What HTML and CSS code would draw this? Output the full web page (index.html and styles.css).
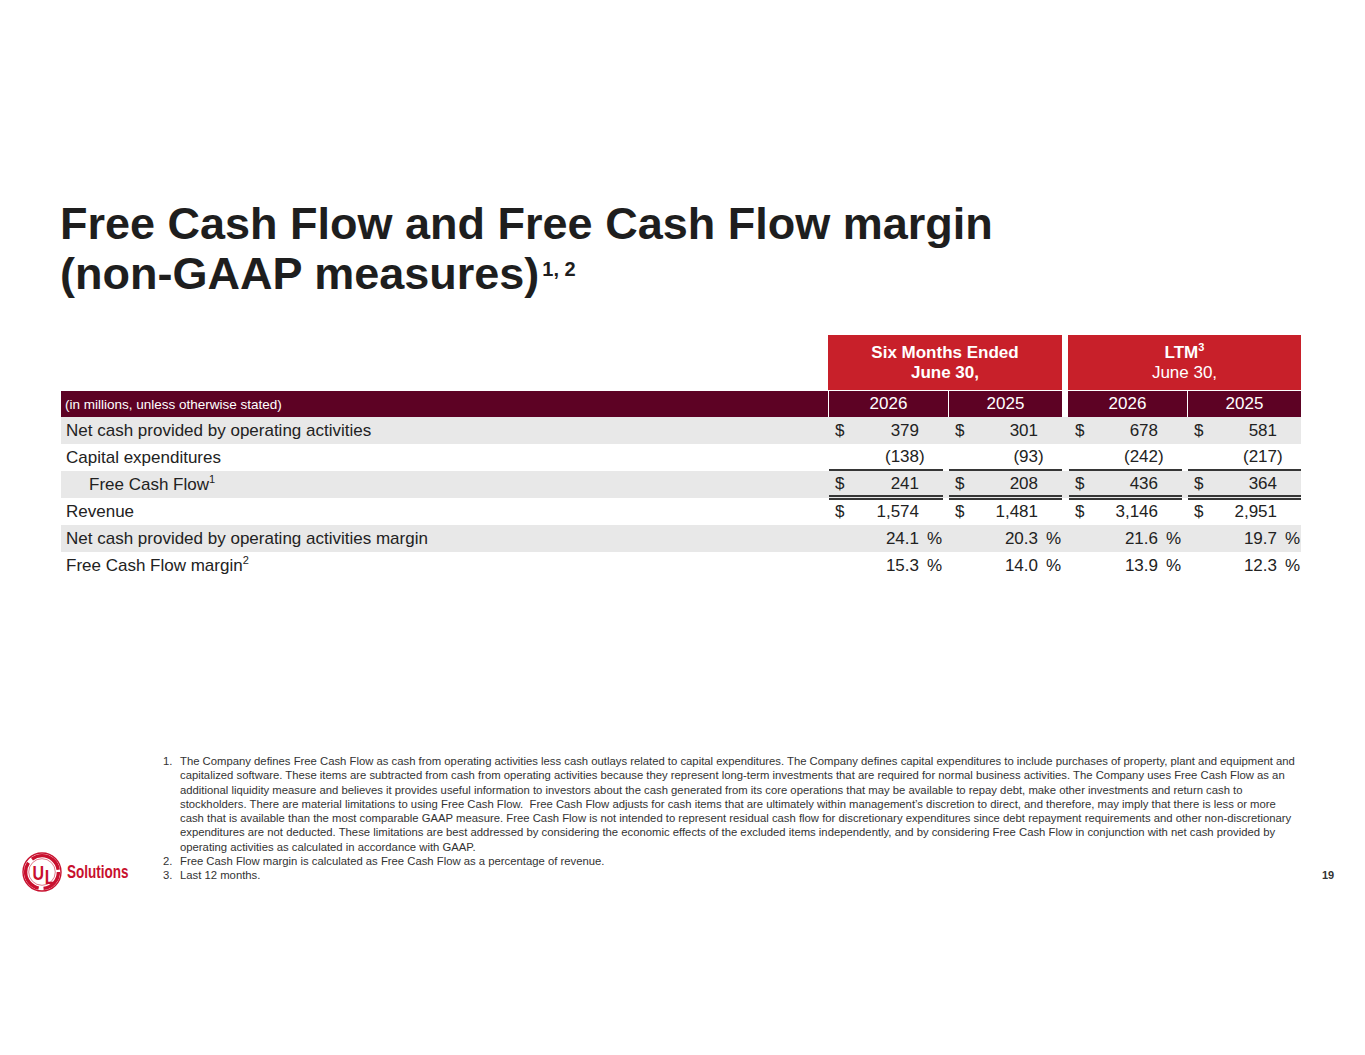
FILE: index.html
```html
<!DOCTYPE html>
<html lang="en">
<head>
<meta charset="utf-8">
<title>Free Cash Flow</title>
<link rel="stylesheet" href="styles.css">
</head>
<body>
<div class="slide">
  <h1 class="title">Free Cash Flow and Free Cash Flow margin<br>(non-GAAP measures)<span class="tsup">1, 2</span></h1>

  <div class="table">
    <div class="grid hdr-top">
      <div></div>
      <div class="redbox g1"><b>Six Months Ended</b><b>June 30,</b></div>
      <div class="redbox g2"><b>LTM<sup class="sm">3</sup></b><span>June 30,</span></div>
    </div>
    <div class="grid hdr-bot">
      <div class="dk lbl-h">(in millions, unless otherwise stated)</div>
      <div class="dk yr sep">2026</div>
      <div class="dk yr sep">2025</div>
      <div class="gap"></div>
      <div class="dk yr">2026</div>
      <div class="dk yr sep">2025</div>
    </div>

    <div class="grid row gray">
      <div class="lbl">Net cash provided by operating activities</div>
      <div class="c c-a"><div class="in"><span>$</span><span class="num">379</span><span class="sfx"></span></div></div>
      <div class="c c-b"><div class="in"><span>$</span><span class="num">301</span><span class="sfx"></span></div></div>
      <div class="gap"></div>
      <div class="c c-a"><div class="in"><span>$</span><span class="num">678</span><span class="sfx"></span></div></div>
      <div class="c c-b"><div class="in"><span>$</span><span class="num">581</span><span class="sfx"></span></div></div>
    </div>

    <div class="grid row single">
      <div class="lbl">Capital expenditures</div>
      <div class="c c-a"><div class="in"><span class="num">(138</span><span class="sfx">)</span></div></div>
      <div class="c c-b"><div class="in"><span class="num">(93</span><span class="sfx">)</span></div></div>
      <div class="gap"></div>
      <div class="c c-a"><div class="in"><span class="num">(242</span><span class="sfx">)</span></div></div>
      <div class="c c-b"><div class="in"><span class="num">(217</span><span class="sfx">)</span></div></div>
    </div>

    <div class="grid row gray double">
      <div class="lbl indent">Free Cash Flow<sup class="sm">1</sup></div>
      <div class="c c-a"><div class="in"><span>$</span><span class="num">241</span><span class="sfx"></span></div></div>
      <div class="c c-b"><div class="in"><span>$</span><span class="num">208</span><span class="sfx"></span></div></div>
      <div class="gap"></div>
      <div class="c c-a"><div class="in"><span>$</span><span class="num">436</span><span class="sfx"></span></div></div>
      <div class="c c-b"><div class="in"><span>$</span><span class="num">364</span><span class="sfx"></span></div></div>
    </div>

    <div class="grid row">
      <div class="lbl">Revenue</div>
      <div class="c c-a"><div class="in"><span>$</span><span class="num">1,574</span><span class="sfx"></span></div></div>
      <div class="c c-b"><div class="in"><span>$</span><span class="num">1,481</span><span class="sfx"></span></div></div>
      <div class="gap"></div>
      <div class="c c-a"><div class="in"><span>$</span><span class="num">3,146</span><span class="sfx"></span></div></div>
      <div class="c c-b"><div class="in"><span>$</span><span class="num">2,951</span><span class="sfx"></span></div></div>
    </div>

    <div class="grid row gray">
      <div class="lbl">Net cash provided by operating activities margin</div>
      <div class="c c-a"><div class="in"><span class="num">24.1</span><span class="sfx pct">%</span></div></div>
      <div class="c c-b"><div class="in"><span class="num">20.3</span><span class="sfx pct">%</span></div></div>
      <div class="gap"></div>
      <div class="c c-a"><div class="in"><span class="num">21.6</span><span class="sfx pct">%</span></div></div>
      <div class="c c-b"><div class="in"><span class="num">19.7</span><span class="sfx pct">%</span></div></div>
    </div>

    <div class="grid row">
      <div class="lbl">Free Cash Flow margin<sup class="sm">2</sup></div>
      <div class="c c-a"><div class="in"><span class="num">15.3</span><span class="sfx pct">%</span></div></div>
      <div class="c c-b"><div class="in"><span class="num">14.0</span><span class="sfx pct">%</span></div></div>
      <div class="gap"></div>
      <div class="c c-a"><div class="in"><span class="num">13.9</span><span class="sfx pct">%</span></div></div>
      <div class="c c-b"><div class="in"><span class="num">12.3</span><span class="sfx pct">%</span></div></div>
    </div>
  </div>

  <div class="footer">
    <div class="logo">
      <svg class="mark" width="40" height="40" viewBox="0 0 40 40" aria-label="UL">
        <circle cx="20" cy="20" r="19" fill="none" stroke="#c8102e" stroke-width="1.4"/>
        <circle cx="20" cy="20" r="16.4" fill="none" stroke="#c8102e" stroke-width="3.4" stroke-dasharray="34 5 32 5" stroke-dashoffset="10"/>
        <circle cx="20" cy="20" r="13.3" fill="none" stroke="#c8102e" stroke-width="0.8" opacity="0.7"/>
        <text transform="translate(10.5 27.5) scale(0.8 1)" class="ul" font-size="20">U<tspan dx="1" dy="4.5">L</tspan></text>
      </svg>
      <span class="brand">Solutions</span>
    </div>
    <div class="notes">
      <div class="note"><span class="n">1.</span><span>The Company defines Free Cash Flow as cash from operating activities less cash outlays related to capital expenditures. The Company defines capital expenditures to include purchases of property, plant and equipment and<br>capitalized software. These items are subtracted from cash from operating activities because they represent long-term investments that are required for normal business activities. The Company uses Free Cash Flow as an<br>additional liquidity measure and believes it provides useful information to investors about the cash generated from its core operations that may be available to repay debt, make other investments and return cash to<br>stockholders. There are material limitations to using Free Cash Flow.&nbsp; Free Cash Flow adjusts for cash items that are ultimately within management’s discretion to direct, and therefore, may imply that there is less or more<br>cash that is available than the most comparable GAAP measure. Free Cash Flow is not intended to represent residual cash flow for discretionary expenditures since debt repayment requirements and other non-discretionary<br>expenditures are not deducted. These limitations are best addressed by considering the economic effects of the excluded items independently, and by considering Free Cash Flow in conjunction with net cash provided by<br>operating activities as calculated in accordance with GAAP.</span></div>
      <div class="note"><span class="n">2.</span><span>Free Cash Flow margin is calculated as Free Cash Flow as a percentage of revenue.</span></div>
      <div class="note"><span class="n">3.</span><span>Last 12 months.</span></div>
    </div>
    <div class="pgnum">19</div>
  </div>
</div>
</body>
</html>
```

FILE: styles.css
```css
* { box-sizing: border-box; }
html, body { margin: 0; padding: 0; background: #ffffff; }
body {
  font-family: "Liberation Sans", Arial, sans-serif;
  color: #222222;
}
.slide {
  width: 1365px;
  height: 1055px;
  padding-top: 199px;
  overflow: hidden;
}
.title {
  margin: 0;
  padding-left: 60px;
  font-size: 45px;
  line-height: 50px;
  font-weight: bold;
  color: #1e1e1e;
}
.tsup {
  font-size: 20px;
  margin-left: 3px;
  vertical-align: 13px;
  line-height: 0;
}
.table {
  margin-top: 36px;
  margin-left: 61px;
  width: 1240px;
}
.grid {
  display: grid;
  grid-template-columns: 767px 120px 114px 6px 119px 114px;
}
.hdr-top {
  height: 56px;
  padding-bottom: 1px;
}
.redbox {
  background: #c8202a;
  color: #ffffff;
  font-size: 17px;
  line-height: 20px;
  text-align: center;
  display: flex;
  flex-direction: column;
  justify-content: center;
}
.redbox.g1 { grid-column: 2 / 4; }
.redbox.g2 { grid-column: 5 / 7; }
.sm {
  font-size: 11px;
  vertical-align: 7px;
  line-height: 0;
}
.hdr-bot { height: 26px; }
.dk {
  background: #5d0224;
  color: #ffffff;
  display: flex;
  align-items: center;
}
.lbl-h {
  font-size: 13.5px;
  padding-left: 4px;
}
.yr {
  justify-content: center;
  font-size: 17px;
}
.sep { border-left: 1px solid #ffffff; }
.row {
  height: 27px;
  font-size: 17px;
}
.row.gray { background: #e8e8e8; }
.lbl {
  display: block;
  line-height: 27px;
  padding-left: 5px;
  white-space: nowrap;
}
.lbl.indent { padding-left: 28px; }
.c { height: 27px; }
.in {
  height: 27px;
  display: flex;
  align-items: center;
  padding-left: 6px;
  margin-left: 1px;
}
.c-a .in { margin-right: 5px; }
.num { margin-left: auto; }
.sfx { width: 24px; }
.sfx.pct { padding-left: 8px; }
.single .in { border-bottom: 2px solid #363636; }
.double .in {
  height: 29px;
  padding-top: 2px;
  border-bottom: 5px double #363636;
  position: relative;
  z-index: 1;
}
.footer {
  margin-top: 175px;
  display: flex;
  align-items: last baseline;
}
.logo {
  width: 163px;
  padding-left: 22px;
  display: flex;
  align-items: center;
  align-self: flex-end;
  margin-bottom: -10px;
}
.mark { display: block; flex: none; }
.ul {
  font-family: "Liberation Sans", Arial, sans-serif;
  font-weight: bold;
  fill: #c8102e;
}
.brand {
  margin-left: 5px;
  font-family: "Liberation Sans", Arial, sans-serif;
  font-weight: bold;
  font-size: 18px;
  color: #c8102e;
  display: inline-block;
  transform: scaleX(0.75);
  transform-origin: left center;
}
.notes {
  width: 1159px;
  font-size: 11.3px;
  line-height: 14.25px;
  color: #333333;
}
.note {
  display: grid;
  grid-template-columns: 17px auto;
  white-space: nowrap;
}
.pgnum {
  font-size: 11px;
  font-weight: bold;
  color: #333333;
}
```
